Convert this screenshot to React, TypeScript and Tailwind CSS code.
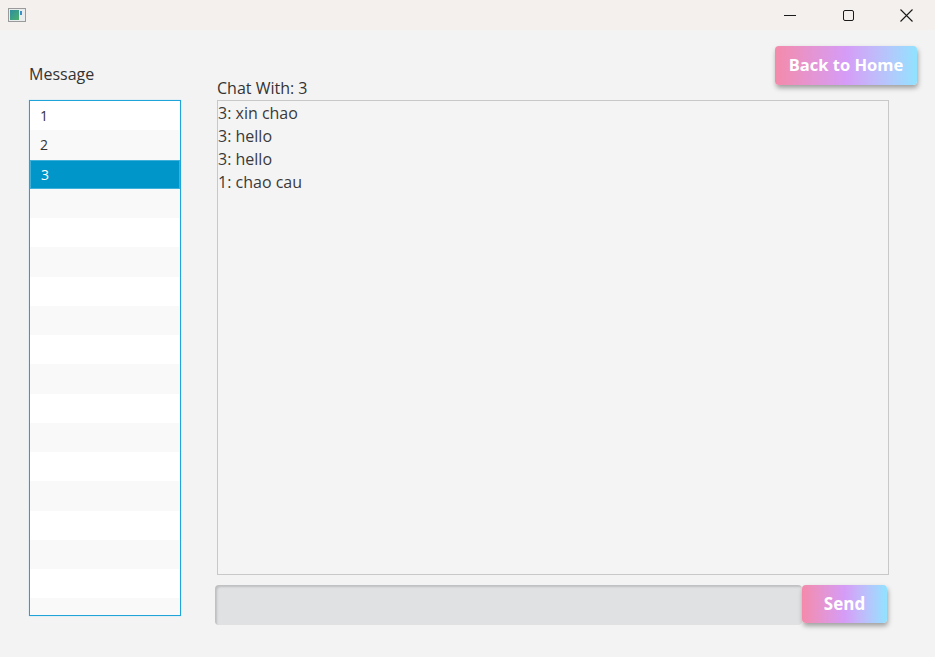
import React from "react";

const rows = Array.from({ length: 18 }, (_, i) => i);
const items = ["1", "2", "3"];
const messages = ["3: xin chao", "3: hello", "3: hello", "1: chao cau"];

export default function App() {
  return (
    <div className="w-[935px] h-[657px] bg-[#f3f3f3] flex flex-col overflow-hidden" style={{ fontFamily: '"Segoe UI", "Open Sans", "Liberation Sans", sans-serif' }}>
      {/* Title bar */}
      <div className="h-[30px] bg-[#f3f0ed] flex items-center shrink-0">
        <div className="ml-[8px] w-[18px] h-[14px] border border-[#9a9a9a] bg-[#e8ecec] flex items-center p-[1px] gap-[1px]">
          <div className="w-[9px] h-[10px] bg-gradient-to-br from-[#2f8e9c] to-[#4caf6a]" />
          <div className="w-[2px] h-[4px] self-start mt-[1px] bg-[#3b8fc7]" />
        </div>
        <div className="flex-1" />
        <div className="w-[58px] h-[30px] flex items-center justify-center">
          <div className="w-[12px] h-[1px] bg-[#1a1a1a]" />
        </div>
        <div className="w-[58px] h-[30px] flex items-center justify-center">
          <div className="w-[11px] h-[11px] border border-[#1a1a1a] rounded-[2px]" />
        </div>
        <div className="w-[58px] h-[30px] flex items-center justify-center">
          <svg width="13" height="13" viewBox="0 0 13 13">
            <path d="M0.5 0.5 L12.5 12.5 M12.5 0.5 L0.5 12.5" stroke="#1a1a1a" strokeWidth="1.1" />
          </svg>
        </div>
      </div>

      {/* Content */}
      <div className="flex flex-1">
        {/* Left column */}
        <div className="ml-[29px] w-[152px] flex flex-col">
          <div className="mt-[34px] h-[20px] leading-[20px] text-[16px] text-[#333333]">Message</div>
          <div className="mt-[16px] h-[516px] border border-[#1fa3d9] bg-white overflow-hidden shadow-[0_0_1px_#8fd3ef]">
            {rows.map((i) => {
              const selected = i === 2;
              const label = items[i];
              return (
                <div
                  key={i}
                  className={
                    "h-[29.25px] flex items-center pl-[10px] text-[14px] " +
                    (selected
                      ? "bg-[#0096c9] text-white border border-[#3fb0da]"
                      : i % 2 === 0
                      ? "bg-white text-[#333333]"
                      : "bg-[#f9f9f9] text-[#333333]")
                  }
                >
                  {label ?? ""}
                </div>
              );
            })}
          </div>
        </div>

        {/* Right column */}
        <div className="ml-[36px] flex-1 flex flex-col">
          <div className="self-end mr-[18px] mt-[16px] h-[39px] w-[142px] rounded-[4px] bg-gradient-to-r from-[#f48aaa] via-[#d59cf7] to-[#90e2ff] shadow-[1px_3px_5px_rgba(0,0,0,0.35)] flex items-center justify-center text-white font-bold text-[16.5px]">
            Back to Home
          </div>
          <div className="mt-[-7px] h-[20px] leading-[20px] text-[16px] text-[#333333]">Chat With: 3</div>
          <div className="mt-[2px] w-[672px] h-[475px] border border-[#c8c8c8] bg-[#f4f4f4] pt-[1px]">
            {messages.map((m, i) => (
              <div key={i} className="h-[23px] leading-[23px] text-[16px] text-[#3a3a3a]">
                {m}
              </div>
            ))}
          </div>
          <div className="mt-[10px] flex ml-[-2px]">
            <div className="w-[587px] h-[40px] rounded-[4px] bg-[#e0e1e3] shadow-[inset_2px_2px_2px_rgba(0,0,0,0.15)]" />
            <div className="w-[85px] h-[38px] rounded-[4px] bg-gradient-to-r from-[#f48aaa] via-[#d59cf7] to-[#90e2ff] shadow-[1px_3px_5px_rgba(0,0,0,0.35)] flex items-center justify-center text-white font-bold text-[17px]">
              Send
            </div>
          </div>
        </div>
      </div>
    </div>
  );
}
